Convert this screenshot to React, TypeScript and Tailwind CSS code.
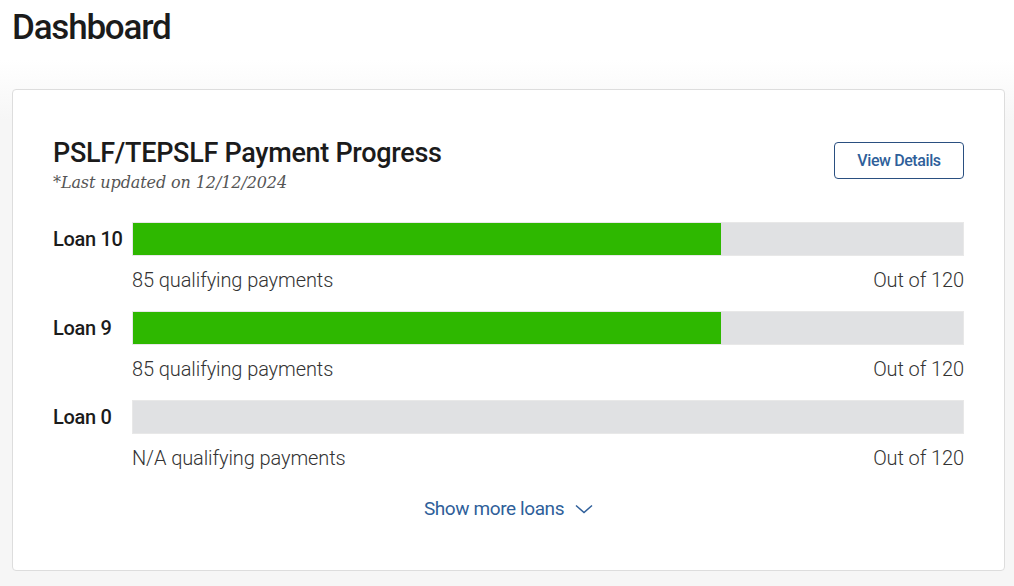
const loans = [
  { name: "Loan 10", count: 85, total: 120 },
  { name: "Loan 9", count: 85, total: 120 },
  { name: "Loan 0", count: null as number | null, total: 120 },
];

export default function App() {
  return (
    <div className="min-h-[586px] bg-white font-['Roboto',sans-serif] text-[#1b1b1b]">
      <h1 className="px-3 pt-[6px] text-[35px] leading-[44px] font-medium tracking-[-1.2px]">
        Dashboard
      </h1>

      <section className="mt-[10px] min-h-[526px] bg-[linear-gradient(to_bottom,#ffffff_0px,#f6f6f6_60px,#f6f6f6_100%)] pt-[29px] pr-[9px] pb-4 pl-3">
        {/* Payment progress card */}
        <div className="rounded-[4px] border border-[#dddddd] bg-white px-10 pt-[44px] pb-[47px]">
          <div className="flex items-start justify-between">
            <div>
              <h2 className="text-[27px] leading-[38px] font-medium tracking-[-0.3px]">
                PSLF/TEPSLF Payment Progress
              </h2>
              <p className="mt-[1px] font-['DejaVu_Serif','Liberation_Serif',serif] text-[16px] italic leading-5 tracking-[-0.1px] text-[#555]">
                *Last updated on 12/12/2024
              </p>
            </div>
            <button className="mt-[8px] h-[37px] w-[130px] rounded-[4px] border border-[#2a4f80] text-[16px] font-medium tracking-[-0.4px] text-[#2f5f9a]">
              View Details
            </button>
          </div>

          <div className="mt-[29px] flex flex-col gap-[17px]">
            {loans.map((loan) => (
              <div key={loan.name}>
                <div className="flex items-center">
                  <div className="w-[79px] shrink-0 whitespace-nowrap text-[20px] font-medium tracking-[-0.3px]">
                    {loan.name}
                  </div>
                  <div className="h-[34px] flex-1 border border-[#e8e8e8] bg-[#e0e1e3]">
                    {loan.count !== null && (
                      <div
                        className="h-full bg-[#2eb800]"
                        style={{ width: `${(loan.count / loan.total) * 100}%` }}
                      />
                    )}
                  </div>
                </div>
                <div className="mt-[10px] ml-[79px] flex justify-between text-[20px] leading-[28px] font-light tracking-[-0.1px] text-[#333]">
                  <span>{loan.count ?? "N/A"} qualifying payments</span>
                  <span>Out of {loan.total}</span>
                </div>
              </div>
            ))}
          </div>

          <div className="mt-[23px] flex justify-center">
            <button className="flex h-[28px] items-center gap-[11px] text-[19px] tracking-[-0.4px] text-[#2f5f9a]">
              Show more loans
              <svg width="18" height="10" viewBox="0 0 18 10" fill="none" stroke="currentColor" strokeWidth="1.5">
                <polyline points="1,1.5 9,8.5 17,1.5" />
              </svg>
            </button>
          </div>
        </div>
      </section>
    </div>
  );
}
